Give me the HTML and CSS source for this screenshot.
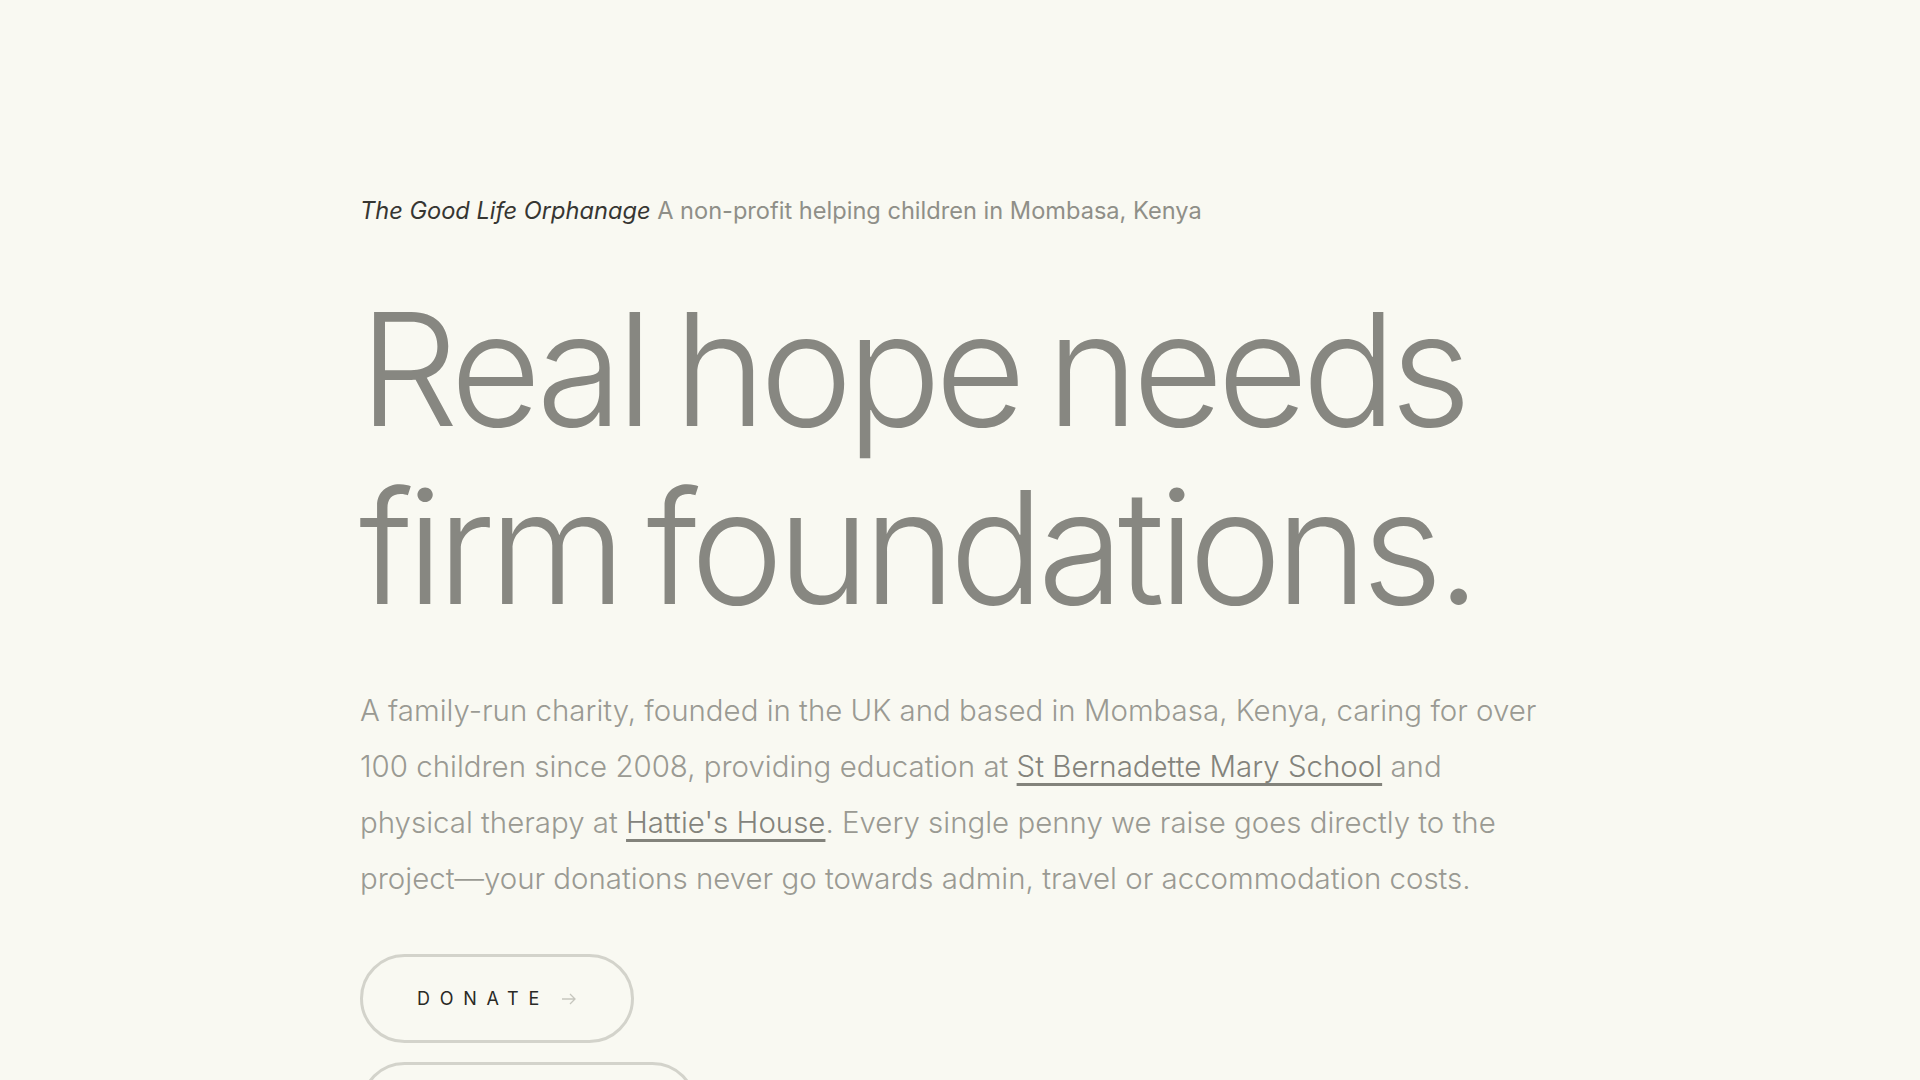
FILE: index.html
```html
<!DOCTYPE html>
<html lang="en">
<head>
    <meta charset="UTF-8">
    <meta name="viewport" content="width=device-width, initial-scale=1.0">
    <title>The Good Life Orphanage</title>
    <link rel="stylesheet" href="styles.css">
</head>
<body>
    <main class="container">
        <header class="intro">
            <p class="eyebrow"><em>The Good Life Orphanage</em> A non-profit helping children in Mombasa, Kenya</p>
        </header>

        <h1 class="headline">Real hope needs<br>firm foundations.</h1>

        <p class="lede">
            A family-run charity, founded in the UK and based in Mombasa, Kenya, caring for over 100 children since 2008, providing education at <a href="#">St Bernadette Mary School</a> and physical therapy at <a href="#">Hattie's House</a>. Every single penny we raise goes directly to the project&mdash;your donations never go towards admin, travel or accommodation costs.
        </p>

        <div class="actions">
            <a class="pill" href="#">Donate
                <svg class="arrow" width="15" height="12" viewBox="0 0 15 12" aria-hidden="true"><path d="M1 6h13M9 1l5 5-5 5" fill="none" stroke="currentColor" stroke-width="1.3"/></svg>
            </a>
            <a class="pill" href="#">Volunteer
                <svg class="arrow" width="15" height="12" viewBox="0 0 15 12" aria-hidden="true"><path d="M1 6h13M9 1l5 5-5 5" fill="none" stroke="currentColor" stroke-width="1.3"/></svg>
            </a>
        </div>
    </main>
</body>
</html>
```

FILE: styles.css
```css
body {
    margin: 0;
    background-color: #f9f9f2;
    color: #8a8a84;
    font-family: Inter, 'Noto Sans', sans-serif;
}
.container {
    max-width: 1200px;
    margin: 0 auto;
    padding-top: 193px;
}
.eyebrow {
    margin: 0;
    font-size: 23.6px;
    line-height: 36px;
    color: #8f8f88;
}
.eyebrow em {
    color: #363632;
}
.headline {
    margin: 51px 0 0 -1px;
    font-size: 157px;
    font-weight: 270;
    line-height: 178px;
    letter-spacing: -0.04em;
    word-spacing: -0.07em;
    color: #878781;
}
.lede {
    margin: 46px 0 0;
    font-size: 29.45px;
    font-weight: 300;
    line-height: 56px;
    color: #9a9a93;
}
.lede a {
    color: #83837c;
    text-decoration: underline;
    text-decoration-thickness: 2.5px;
    text-underline-offset: 6px;
}
.actions {
    display: flex;
    flex-direction: column;
    align-items: flex-start;
    gap: 19px;
    margin-top: 48px;
}
.pill {
    display: inline-flex;
    align-items: center;
    height: 89px;
    box-sizing: border-box;
    padding: 0 55px 0 54px;
    border: 3px solid #d3d3cb;
    border-radius: 45px;
    font-size: 18px;
    font-weight: 400;
    letter-spacing: 0.54em;
    text-transform: uppercase;
    text-decoration: none;
    color: #2a2a26;
}
.pill .arrow {
    margin-left: 12px;
    color: #c6c6be;
}
```
